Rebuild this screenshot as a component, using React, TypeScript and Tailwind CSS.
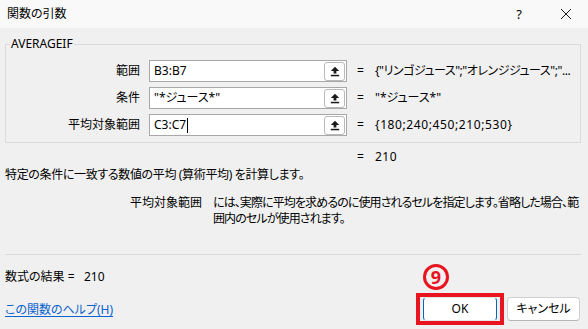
import React from "react";

function RefIcon() {
  return (
    <svg width="10" height="11" viewBox="0 0 10 11">
      <path d="M5 0.8 L9.2 5 H6.4 V7.6 H3.6 V5 H0.8 Z" fill="#1a1a1a" />
      <rect x="0.8" y="8.8" width="8.4" height="1.5" fill="#1a1a1a" />
    </svg>
  );
}

function ArgRow({ label, value, result, cursor, track }: { label: string; value: string; result: string; cursor?: boolean; track?: string }) {
  return (
    <div className="flex h-[22px] items-center">
      <div className="w-[134px] text-right leading-[16px]">{label}</div>
      <div className="ml-[9px] flex h-[22px] w-[198px] items-center border border-[#a8a8a8] bg-white">
        <div className="flex flex-1 items-center pl-[4px] leading-[16px] whitespace-pre">
          {value}
          {cursor && <span className="ml-[1px] inline-block h-[15px] w-px bg-black" />}
        </div>
        <div className="mr-px mt-[1px] flex h-[19px] w-[21px] items-center justify-center rounded-[3px] border border-[#b9b9b9] bg-white">
          <RefIcon />
        </div>
      </div>
      <div className="ml-[10px] w-[18px] leading-[16px]">=</div>
      <div className={"whitespace-pre leading-[16px] " + (track ?? "")}>{result}</div>
    </div>
  );
}

export default function App() {
  return (
    <div
      className="flex h-[329px] w-[588px] flex-col overflow-hidden bg-[#f0f0f0] text-[12px] text-black [font-feature-settings:'palt']"
      style={{ fontFamily: '"Noto Sans", "Noto Sans CJK JP", sans-serif' }}
    >
      {/* Title bar */}
      <div className="flex h-[28px] shrink-0 items-center bg-[#f9f9f9] pl-[7px]">
        <div className="leading-[16px]">関数の引数</div>
        <div className="ml-auto flex items-center">
          <div className="w-[10px] text-center text-[13px] leading-[16px]">?</div>
          <div className="ml-[35px] mr-[15px] flex h-[16px] w-[14px] items-center justify-center">
            <svg width="12" height="12" viewBox="0 0 12 12">
              <path d="M1 1 L11 11 M11 1 L1 11" stroke="#1a1a1a" strokeWidth="1" />
            </svg>
          </div>
        </div>
      </div>

      {/* Body */}
      <div className="flex flex-1 flex-col pl-[5px] pr-[7px]">
        <fieldset className="mt-[8px] border border-[#dadada] pb-[6px]">
          <legend className="ml-[4px] px-px leading-[16px]">AVERAGEIF</legend>
          <div className="flex flex-col gap-[5px] pt-[8px]">
            <ArgRow label="範囲" value="B3:B7" result={'{"リンゴジュース";"オレンジジュース";"...'} track="tracking-[-0.45px]" />
            <ArgRow label="条件" value={'"*ジュース*"'} result={'"*ジュース*"'} />
            <ArgRow label="平均対象範囲" value="C3:C7" result="{180;240;450;210;530}" cursor track="tracking-[0.6px]" />
          </div>
        </fieldset>

        <div className="mt-[6px] flex leading-[16px]">
          <div className="w-[352px]" />
          <div className="w-[18px]">=</div>
          <div className="tracking-[0.5px]">210</div>
        </div>

        <div className="mt-[2px] leading-[16px] tracking-[-0.35px]">特定の条件に一致する数値の平均 (算術平均) を計算します。</div>

        <div className="mt-[12px] flex leading-[16px]">
          <div className="w-[197px] shrink-0 text-right">平均対象範囲</div>
          <div className="ml-[11px] whitespace-nowrap tracking-[-0.9px]">
            には、実際に平均を求めるのに使用されるセルを指定します。省略した場合、範
            <br />
            囲内のセルが使用されます。
          </div>
        </div>

        <div className="mt-[27px] h-px bg-[#dadada]" />

        <div className="flex">
          <div className="flex flex-col">
            <div className="mt-[14px] whitespace-pre leading-[16px]">数式の結果 =   210</div>
            <a className="mt-[17px] leading-[16px] text-[#0b63ce] underline underline-offset-2">この関数のヘルプ(H)</a>
          </div>
          <div className="ml-auto mr-px mt-[9px] flex flex-col items-start">
            <div className="ml-[7px] flex h-[26px] w-[26px] items-center justify-center rounded-full border-[3px] border-[#e8141f] text-[18px] font-bold leading-none text-[#e8141f]">
              9
            </div>
            <div className="mt-[3px] flex items-center">
              <div className="flex h-[32px] w-[88px] items-center justify-center border-4 border-[#e8141f]">
                <div className="flex h-[24px] w-[74px] items-center justify-center rounded-[4px] border border-x-[#0067c0] border-y-[#e6e6e6] bg-white leading-[16px]">
                  OK
                </div>
              </div>
              <div className="ml-[3px] flex h-[24px] w-[73px] items-center justify-center rounded-[4px] border border-[#d0d0d0] border-b-[#b5b5b5] bg-white leading-[16px]">
                キャンセル
              </div>
            </div>
          </div>
        </div>
      </div>
    </div>
  );
}
